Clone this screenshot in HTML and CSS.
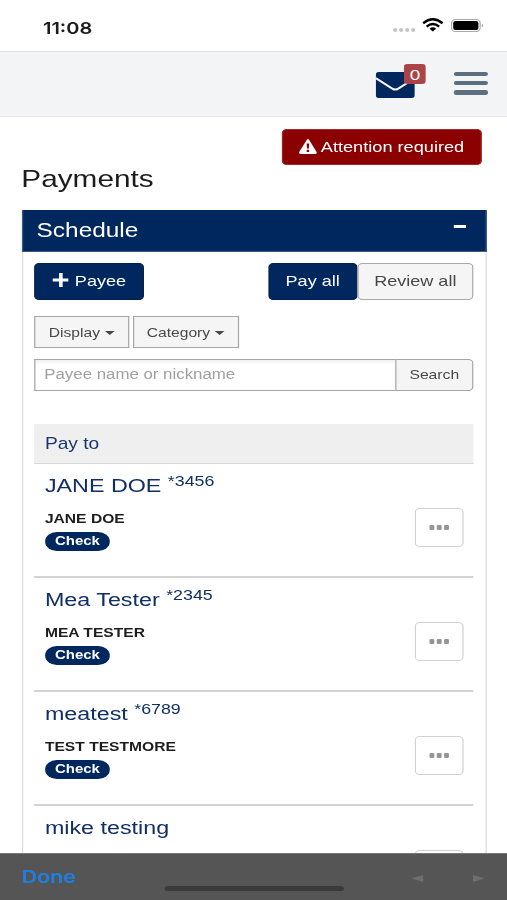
FILE: index.html
```html
<!DOCTYPE html>
<html lang="en">
<head>
<meta charset="utf-8">
<title>Payments</title>
<link rel="stylesheet" href="styles.css">
</head>
<body>
<div class="screen">
  <div class="status">
    <span class="time">11:08</span>
    <svg class="indicators" viewBox="0 0 92 20" preserveAspectRatio="none">
      <g fill="#c4c4c4"><circle cx="3.5" cy="14" r="2"/><circle cx="9.5" cy="14" r="2"/><circle cx="15.6" cy="14" r="2"/><circle cx="21.6" cy="14" r="2"/></g>
      <g fill="none" stroke="#000" stroke-width="2.4"><path d="M31.5 7.3Q41.2 -.6 51 7.3"/><path d="M35 10.6Q41.2 5.4 47.6 10.6"/></g>
      <path d="M38 12.7Q41.2 10 44.5 12.7L41.2 15.6Z"/>
      <rect x="60" y="3.5" width="28.5" height="12" rx="3.6" fill="#fff" stroke="#aaa" stroke-width="1.2"/>
      <rect x="61.6" y="5" width="25.2" height="9" rx="2.2"/>
      <path d="M90.2 7.5Q92.6 9.5 90.2 11.5Z" fill="#999"/>
    </svg>
  </div>
  <header class="topbar">
    <div class="mail">
      <svg class="envelope" viewBox="0 0 39 26" preserveAspectRatio="none">
        <rect width="39" height="26" rx="3" fill="#00285e"/>
        <path d="M0 6.2L16.5 16.6Q19.5 18.6 22.5 16.6L39 6.2" fill="none" stroke="#f2f4f6" stroke-width="2"/>
      </svg>
      <span class="count">0</span>
    </div>
    <div class="menu"><i></i><i></i><i></i></div>
  </header>
  <main>
    <div class="alert">
      <svg viewBox="0 0 18 15" preserveAspectRatio="none"><path d="M7.9 .8Q9 -.6 10.1 .8L17.7 13Q18.3 14.8 16.6 15H1.4Q-.3 14.8 .3 13Z" fill="#fff"/><path d="M7.7 4.5h2.6l-.4 5H8.1zM7.8 10.7h2.4v2.2H7.8z" fill="#8b0000"/></svg>
      <span>Attention required</span>
    </div>
    <h1>Payments</h1>
    <section class="panel">
      <div class="panel-head"><h2>Schedule</h2><i class="collapse"></i></div>
      <div class="panel-body">
        <div class="actions">
          <div class="btn primary payee"><svg viewBox="0 0 16 14" preserveAspectRatio="none"><path d="M6.3 0h3.4v5.4H16v3.2H9.7V14H6.3V8.6H0V5.4h6.3z" fill="#fff"/></svg><span>Payee</span></div>
          <div class="group"><div class="btn primary payall">Pay all</div><div class="btn light review">Review all</div></div>
        </div>
        <div class="filters">
          <div class="filter display"><span>Display</span><i class="caret"></i></div>
          <div class="filter category"><span>Category</span><i class="caret"></i></div>
        </div>
        <div class="search"><input type="text" placeholder="Payee name or nickname"><div class="go">Search</div></div>
        <div class="list-head">Pay to</div>
        <div class="row"><div><h3>JANE DOE <sup>*3456</sup></h3><p>JANE DOE</p><span class="pill">Check</span></div><div class="more"><i></i><i></i><i></i></div></div>
        <div class="row"><div><h3>Mea Tester <sup>*2345</sup></h3><p>MEA TESTER</p><span class="pill">Check</span></div><div class="more"><i></i><i></i><i></i></div></div>
        <div class="row"><div><h3>meatest <sup>*6789</sup></h3><p>TEST TESTMORE</p><span class="pill">Check</span></div><div class="more"><i></i><i></i><i></i></div></div>
        <div class="row"><div><h3>mike testing</h3></div><div class="more"><i></i><i></i><i></i></div></div>
      </div>
    </section>
  </main>
  <footer class="toolbar">
    <span class="done">Done</span>
    <i class="home"></i>
    <svg viewBox="0 0 74 8" preserveAspectRatio="none"><path d="M0 4L12 0V8ZM74 4L62 0V8Z" fill="#6d6d6d"/></svg>
  </footer>
</div>
</body>
</html>
```
FILE: styles.css
```css
* { box-sizing: border-box; }
body { margin: 0; background: #fff; overflow: hidden; }
h1, h2, h3, p { margin: 0; font-weight: 400; }
i { display: block; }
svg { display: block; flex: none; }

/* The layout is drawn narrow and widened to fill the window. */
.screen {
  --navy: #00285e;
  width: calc(100vw / 1.22);
  height: 900px;
  transform: scaleX(1.22);
  transform-origin: 0 0;
  display: flex;
  flex-direction: column;
  overflow: hidden;
  font-family: "Liberation Sans", Arial, sans-serif;
  color: #1c1c1c;
}

.status { flex: none; height: 51px; padding: 4px 19.5px 0 35.2px; display: flex; align-items: center; justify-content: space-between; }
.time { font: 600 16.4px/20px Inter, sans-serif; }
.indicators { width: 75.4px; height: 20px; margin-top: -3px; }

.topbar { flex: none; height: 66px; background: #f2f4f6; border-top: 1px solid #e2e3e5; border-bottom: 1px solid #e6e7e8; display: flex; justify-content: flex-end; padding-right: 16px; }
.mail { position: relative; width: 32px; margin: 20px 32px 0 0; }
.envelope { width: 32px; height: 26px; }
.count { position: absolute; left: 23.3px; top: -8px; width: 17.6px; height: 20px; border-radius: 3px; background: #aa4446; color: #fff; font-size: 15.5px; line-height: 21px; text-align: center; }
.menu { width: 27.5px; padding-top: 19.5px; display: flex; flex-direction: column; gap: 4.5px; }
.menu i { height: 4.7px; border-radius: 2px; background: #5d6e80; }

main { flex: 1; min-height: 0; overflow: hidden; padding: 11.5px 16.4px 0 17.5px; display: flex; flex-direction: column; }
.alert { flex: none; align-self: flex-end; width: 163.5px; height: 36.5px; margin-right: 4.6px; border: 1px solid #a32a2a; border-radius: 4px; background: #8b0000; color: #fff; display: flex; align-items: center; justify-content: center; gap: 3px; font-size: 14.9px; }
.alert svg { width: 14.8px; height: 15px; }
h1 { flex: none; font-size: 24.4px; line-height: 28px; }

.panel { flex: none; margin-top: 16.5px; border: 1px solid #dadcde; border-top: 0; }
.panel-head { height: 42px; margin: 0 -1px; padding: 0 16px 0 11.5px; background: var(--navy); border: 1px solid #3c5c88; border-top-width: 0; color: #fff; display: flex; align-items: center; justify-content: space-between; }
h2 { font-size: 20px; line-height: 24px; }
.collapse { width: 10px; height: 3px; margin-top: -8px; background: #fff; }
.panel-body { padding: 11.5px 10.2px 0 9.8px; }

.actions { display: flex; justify-content: space-between; }
.group { display: flex; }
.btn { height: 36.5px; border-radius: 4px; display: flex; align-items: center; justify-content: center; font-size: 14.8px; }
.primary { background: var(--navy); border: 1px solid #00204f; color: #fff; }
.light { background: #f5f5f5; border: 1px solid #aaa; color: #484848; }
.payee { width: 89.3px; gap: 5px; }
.payee svg { width: 13.8px; height: 14px; margin-top: -2px; }
.payall { width: 73px; }
.review { width: 95.2px; }

.filters { display: flex; gap: 3px; margin-top: 16.5px; }
.filter { height: 32px; border: 1px solid #a6a6a6; background: #f5f5f5; color: #484848; display: flex; align-items: center; justify-content: center; gap: 4px; font-size: 12.8px; }
.display { width: 77.3px; }
.category { width: 87.3px; }
.caret { border: 4px solid transparent; border-top: 4.5px solid #484848; border-bottom: 0; margin-top: 2px; }

.search { display: flex; height: 32.5px; margin-top: 10.5px; }
.search input { flex: 1; min-width: 0; border: 1px solid #a6a6a6; border-right: 0; padding: 0 7px; background: #fff; box-shadow: inset 0 2px 3px #0001; font: 13.8px "Liberation Sans", Arial, sans-serif; outline: 0; }
.search input::placeholder { color: #a0a0a0; opacity: 1; }
.go { width: 64px; border: 1px solid #a6a6a6; border-radius: 0 4px 4px 0; background: #f5f5f5; color: #484848; font-size: 12.9px; display: flex; align-items: center; justify-content: center; }

.list-head { height: 40px; margin-top: 32.5px; padding: 0 8.5px; border-bottom: 1.5px solid #d6d6d6; background: #efefef; color: #17366b; font-size: 15.7px; line-height: 40px; }
.row { height: 114px; border-bottom: 2px solid #d3d3d3; padding: 0 8.2px 0 8.5px; display: flex; justify-content: space-between; }
h3 { height: 42px; font-size: 19.1px; line-height: 43px; color: #0f2f66; white-space: nowrap; }
sup { font-size: 14.6px; line-height: 0; vertical-align: 6.5px; }
.row p { height: 26px; font-size: 12.8px; line-height: 26px; font-weight: 700; }
.pill { display: block; width: 53.3px; height: 19.5px; border-radius: 10px; background: var(--navy); color: #fff; font-size: 12.3px; line-height: 19px; font-weight: 700; text-align: center; }
.more { width: 39.5px; height: 39px; margin-top: 44.5px; border: 1.3px solid #d2d2d2; border-radius: 4px; display: flex; align-items: center; justify-content: center; gap: 1.5px; }
.more i { width: 4.3px; height: 4.5px; border-radius: 1px; background: #969696; }

.toolbar { position: relative; flex: none; height: 47px; padding: 0 18.5px 0 18px; background: #555; border-top: 1px solid #777; display: flex; justify-content: space-between; align-items: center; }
.done { color: #1c7fe0; font: 600 17.5px/22px Inter, sans-serif; }
.home { position: absolute; left: 134.5px; bottom: 9px; width: 147.5px; height: 5.5px; border-radius: 3px; background: #3b3b3b; }
.toolbar svg { width: 60.5px; height: 7px; margin-top: 3px; }
```
